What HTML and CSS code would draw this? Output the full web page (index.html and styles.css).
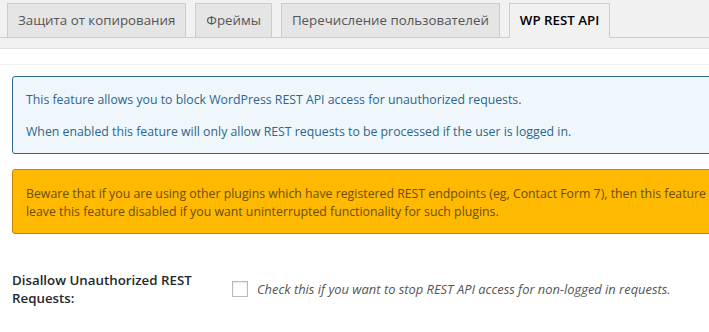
FILE: index.html
```html
<!DOCTYPE html>
<html lang="ru">
<head>
    <meta charset="UTF-8">
    <meta name="viewport" content="width=device-width, initial-scale=1.0">
    <title>WP REST API</title>
    <link rel="stylesheet" href="styles.css">
</head>
<body>
    <!-- Вкладки -->
    <div class="nav-tabs">
        <a class="nav-tab" href="#">Защита от копирования</a>
        <a class="nav-tab" href="#">Фреймы</a>
        <a class="nav-tab" href="#">Перечисление пользователей</a>
        <a class="nav-tab active" href="#">WP REST API</a>
    </div>
    <div class="tabs-gap"></div>

    <div class="panel">
        <div class="panel-head"></div>
        <div class="panel-body">
            <div class="notice notice-info">
                <p>This feature allows you to block WordPress REST API access for unauthorized requests.</p>
                <p>When enabled this feature will only allow REST requests to be processed if the user is logged in.</p>
            </div>

            <div class="notice notice-warning">
                <p class="line">Beware that if you are using other plugins which have registered REST endpoints (eg, Contact Form 7), then this feature will also block REST requests used by these plugins. It is recommended that you</p>
                <p class="line">leave this feature disabled if you want uninterrupted functionality for such plugins.</p>
            </div>

            <div class="form-row">
                <label class="form-label" for="disallowRest">Disallow Unauthorized REST Requests:</label>
                <div class="form-field">
                    <input type="checkbox" id="disallowRest" class="checkbox">
                    <span class="description">Check this if you want to stop REST API access for non-logged in requests.</span>
                </div>
            </div>
        </div>
    </div>
</body>
</html>
```

FILE: styles.css
```css
* {
    margin: 0;
    padding: 0;
    box-sizing: border-box;
}

html, body {
    overflow: hidden;
}

body {
    background: #f1f1f1;
    font-family: "Open Sans", "Noto Sans", sans-serif;
    font-size: 12.3px;
    color: #23282d;
}

.nav-tabs {
    display: flex;
    gap: 9px;
    padding: 3px 0 0 7px;
    border-bottom: 1px solid #cccccc;
}

.nav-tab {
    display: block;
    margin-bottom: -1px;
    padding: 4px 10px 5px;
    border: 1px solid #cccccc;
    background: #e5e5e5;
    color: #555555;
    font-size: 13.3px;
    line-height: 24px;
    text-decoration: none;
    white-space: nowrap;
}

.nav-tab.active {
    background: #f1f1f1;
    border-bottom-color: #f1f1f1;
    color: #000000;
    font-weight: 600;
}

.tabs-gap {
    height: 11px;
    border-bottom: 1px solid #e2e2e2;
}

.panel {
    background: #ffffff;
    min-height: 300px;
}

.panel-head {
    height: 16px;
    border-bottom: 1px solid #f0f0f0;
}

.panel-body {
    width: 820px;
    padding: 11px 0 0 12px;
}

.notice {
    border: 1px solid;
    border-radius: 3px;
    padding: 14px 13px 12px;
    line-height: 18px;
}

.notice-info {
    background: #eff7fc;
    border-color: #2b6a8c;
    color: #2e6689;
}

.notice-info p + p {
    margin-top: 14px;
}

.notice-warning {
    margin-top: 15px;
    padding: 15px 13px 12px;
    background: #ffb900;
    border-color: #c98200;
    color: #6b4d0c;
}

.notice-warning .line {
    white-space: nowrap;
    overflow: hidden;
}

.form-row {
    display: flex;
    margin-top: 37px;
}

.form-label {
    width: 220px;
    font-size: 13.3px;
    font-weight: 600;
    line-height: 18px;
    color: #23282d;
}

.form-field {
    display: flex;
    align-items: center;
    gap: 9px;
    height: 36px;
}

.checkbox {
    appearance: none;
    width: 16px;
    height: 16px;
    border: 1px solid #b4b9be;
    background: #ffffff;
    box-shadow: inset 0 1px 2px rgba(0, 0, 0, 0.1);
}

.description {
    font-size: 12.9px;
    font-style: italic;
    color: #555555;
}
```
